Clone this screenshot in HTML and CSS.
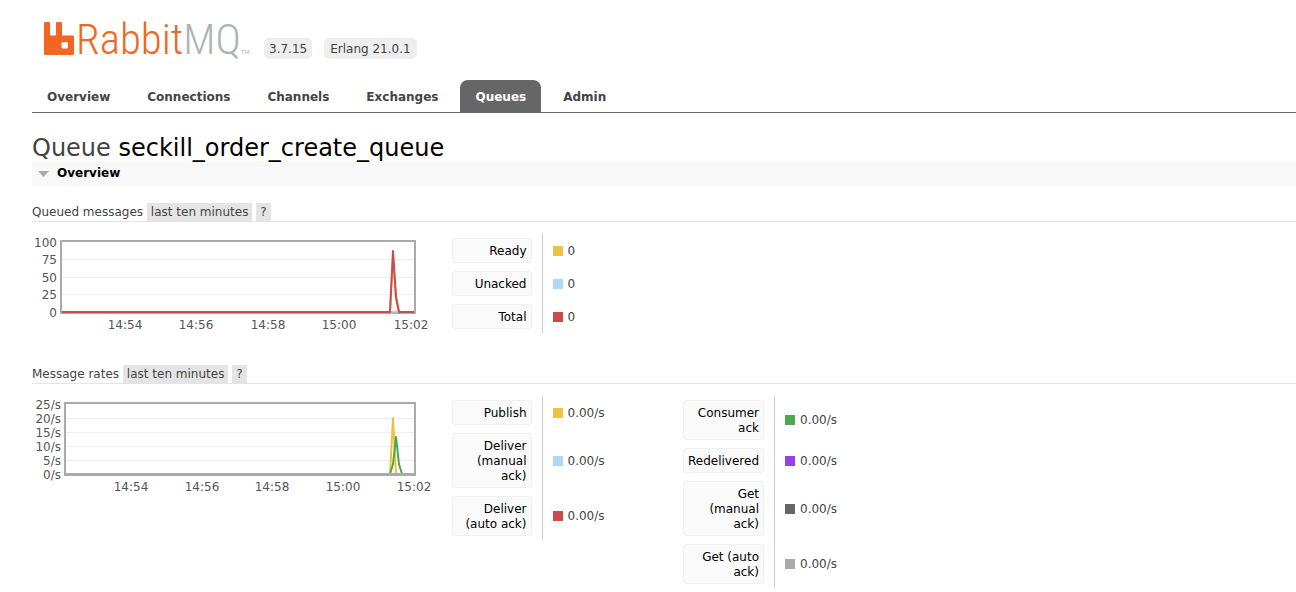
FILE: index.html
```html
<!DOCTYPE html>
<html lang="en">
<head>
<meta charset="utf-8">
<title>RabbitMQ Management</title>
<link rel="stylesheet" href="styles.css">
</head>
<body>
<header class="header">
  <a class="logo" href="#">
    <svg class="logo-mark" viewBox="0 0 30 33" aria-hidden="true"><path fill="#f26522" fill-rule="evenodd" d="M1 0h4q1 0 1 1v11.500q0 1 1 1h4q1 0 1-1V1q0-1 1-1h4q1 0 1 1v11.500q0 1 1 1H29q1 0 1 1V32q0 1-1 1H1q-1 0-1-1V1q0-1 1-1zM19 20q-1.500 0-1.500 1.500v3.500q0 1.500 1.500 1.500h3.500q1.500 0 1.500-1.500v-3.500q0-1.500-1.500-1.500z"/></svg>
    <span class="logo-text">Rabbit<span class="logo-mq">MQ</span></span><span class="logo-tm">TM</span>
  </a>
  <span class="version">3.7.15</span>
  <span class="version">Erlang 21.0.1</span>
</header>
<nav class="tabs">
  <a class="tab" href="#">Overview</a>
  <a class="tab" href="#">Connections</a>
  <a class="tab" href="#">Channels</a>
  <a class="tab" href="#">Exchanges</a>
  <a class="tab tab-selected" href="#">Queues</a>
  <a class="tab" href="#">Admin</a>
</nav>
<main class="main">
  <h1 class="title">Queue <b class="queue-name">seckill_order_create_queue</b></h1>
  <h2 class="section"><svg class="arrow" viewBox="0 0 11 6" aria-hidden="true"><path d="M0 0h11L5.500 6z" fill="#aaa"/></svg>Overview</h2>

  <h3 class="subhead">Queued messages <button class="option" type="button">last ten minutes</button> <button class="option" type="button">?</button></h3>
  <div class="stats">
    <svg class="chart" viewBox="0 0 400 102" role="img" aria-label="Queued messages">
      <path class="grid" d="M30 25.500h354M30 43.500h354M30 60.500h354"/>
      <rect class="frame" x="29" y="7" width="354" height="72"/>
      <path class="line blue" d="M358 77.500h9"/>
      <path class="line yellow" d="M30 78H358L361 22L364 64L367 78H382"/>
      <path class="line red" d="M30 78H358L361 17L364 63L367 78H382"/>
      <g class="y-labels"><text x="25" y="13">100</text><text x="25" y="30">75</text><text x="25" y="48">50</text><text x="25" y="65">25</text><text x="25" y="83">0</text></g>
      <g class="x-labels"><text x="93" y="95">14:54</text><text x="164" y="95">14:56</text><text x="236" y="95">14:58</text><text x="307" y="95">15:00</text><text x="379" y="95">15:02</text></g>
    </svg>
    <table class="legend">
      <tr><th scope="row"><span class="key">Ready</span></th><td><i class="swatch bg-yellow"></i>0</td></tr>
      <tr><th scope="row"><span class="key">Unacked</span></th><td><i class="swatch bg-blue"></i>0</td></tr>
      <tr><th scope="row"><span class="key">Total</span></th><td><i class="swatch bg-red"></i>0</td></tr>
    </table>
  </div>

  <h3 class="subhead">Message rates <button class="option" type="button">last ten minutes</button> <button class="option" type="button">?</button></h3>
  <div class="stats">
    <svg class="chart" viewBox="0 0 400 102" role="img" aria-label="Message rates">
      <path class="grid" d="M34 22.500h350M34 36.500h350M34 50.500h350M34 64.500h350"/>
      <path class="line yellow" d="M358 78L361 22L364 78"/>
      <path class="line green" d="M358 78L361 68L364 41L367 68L370 78"/>
      <rect class="frame" x="33" y="7" width="350" height="72"/>
      <path class="baseline" d="M33 78h350"/>
      <g class="y-labels"><text x="29" y="13">25/s</text><text x="29" y="27">20/s</text><text x="29" y="41">15/s</text><text x="29" y="55">10/s</text><text x="29" y="69">5/s</text><text x="29" y="83">0/s</text></g>
      <g class="x-labels"><text x="99" y="95">14:54</text><text x="170" y="95">14:56</text><text x="240" y="95">14:58</text><text x="311" y="95">15:00</text><text x="382" y="95">15:02</text></g>
    </svg>
    <table class="legend">
      <tr><th scope="row"><span class="key">Publish</span></th><td><i class="swatch bg-yellow"></i>0.00/s</td></tr>
      <tr><th scope="row"><span class="key">Deliver (manual ack)</span></th><td><i class="swatch bg-blue"></i>0.00/s</td></tr>
      <tr><th scope="row"><span class="key">Deliver (auto ack)</span></th><td><i class="swatch bg-red"></i>0.00/s</td></tr>
    </table>
    <table class="legend legend-wide">
      <tr><th scope="row"><span class="key">Consumer ack</span></th><td><i class="swatch bg-green"></i>0.00/s</td></tr>
      <tr><th scope="row"><span class="key">Redelivered</span></th><td><i class="swatch bg-purple"></i>0.00/s</td></tr>
      <tr><th scope="row"><span class="key">Get (manual ack)</span></th><td><i class="swatch bg-dark"></i>0.00/s</td></tr>
      <tr><th scope="row"><span class="key">Get (auto ack)</span></th><td><i class="swatch bg-gray"></i>0.00/s</td></tr>
    </table>
  </div>
</main>
</body>
</html>
```
FILE: styles.css
```css
* { box-sizing: border-box; }
body {
  margin: 0;
  padding: 16px 0 0 32px;
  background: #fff;
  color: #444;
  font: 12px/15px Verdana, "DejaVu Sans", sans-serif;
}
.header { display: flex; align-items: flex-end; gap: 12px; height: 43px; }
.logo { display: flex; align-items: flex-end; height: 43px; width: 220px; padding: 0 0 4px 12px; color: #f26522; text-decoration: none; }
.logo-mark { flex: none; width: 30px; height: 33px; margin-right: 2px; }
.logo-text { font: 300 43px/32px "Roboto Condensed Light", "Roboto Condensed", "Open Sans Condensed Light", "Open Sans Condensed", sans-serif; }
.logo-mq { color: #a9b5b0; }
.logo-tm { color: #a9b5b0; font: 6px/6px "Liberation Sans", sans-serif; }
.version { padding: 4px 5px 2px; border-radius: 5px; background: #eee; }
.version + .version { padding: 4px 6px 2px; }
.tabs { display: flex; gap: 7px; margin-top: 21px; border-bottom: 1px solid #666; }
.tab { padding: 10px 15px 7px; border-radius: 8px 8px 0 0; color: #444; font-weight: bold; text-decoration: none; }
.tab-selected { background: #666; color: #fff; }
.title { margin: 20px 0 0; padding-top: 2px; font-size: 24px; line-height: 26px; font-weight: normal; }
.queue-name { color: #000; font-weight: normal; }
.section { display: flex; align-items: center; margin: 0; padding: 5px 6px; background: #f8f8f8; color: #000; font-size: 12px; line-height: 15px; }
.arrow { width: 11px; height: 6px; margin-right: 8px; }
.subhead { margin: 17px 0 12px; border-bottom: 1px solid #e4e4e4; font-size: 12px; line-height: 14px; font-weight: normal; }
.option { padding: 2px 4px 1px; border: 0; background: #e4e4e4; color: #444; font: inherit; line-height: 15px; }
.stats { display: flex; align-items: flex-start; min-height: 114px; }
.chart { flex: none; width: 400px; height: 102px; margin-right: 20px; }
.chart text { fill: #545454; font-size: 12px; }
.y-labels { text-anchor: end; }
.x-labels { text-anchor: middle; }
.grid { stroke: #eee; }
.frame { fill: none; stroke: #aaa; stroke-width: 2; }
.baseline { stroke: #aaa; stroke-width: 2; }
.line { fill: none; stroke-width: 2; stroke-linejoin: round; }
.yellow { stroke: #edc240; }
.blue { stroke: #afd8f8; }
.red { stroke: #cb4b4b; }
.green { stroke: #4da74d; }
.legend { border-collapse: collapse; margin-right: 57px; }
.legend th { width: 90px; padding: 4px 10px 4px 0; border-right: 1px solid #ccc; font-weight: normal; text-align: right; }
.legend-wide th { width: 91px; }
.legend td { width: 84px; padding: 5px 10px 4px; }
.key { display: block; padding: 5px 4px 3px; border: 1px solid #f0f0f0; border-radius: 3px; background: #fafafa; color: #000; }
.swatch { display: inline-block; width: 10px; height: 10px; margin-right: 5px; vertical-align: -1px; }
.bg-yellow { background: #edc240; }
.bg-blue { background: #afd8f8; }
.bg-red { background: #cb4b4b; }
.bg-green { background: #4da74d; }
.bg-purple { background: #9440ed; }
.bg-dark { background: #666; }
.bg-gray { background: #aaa; }
```
